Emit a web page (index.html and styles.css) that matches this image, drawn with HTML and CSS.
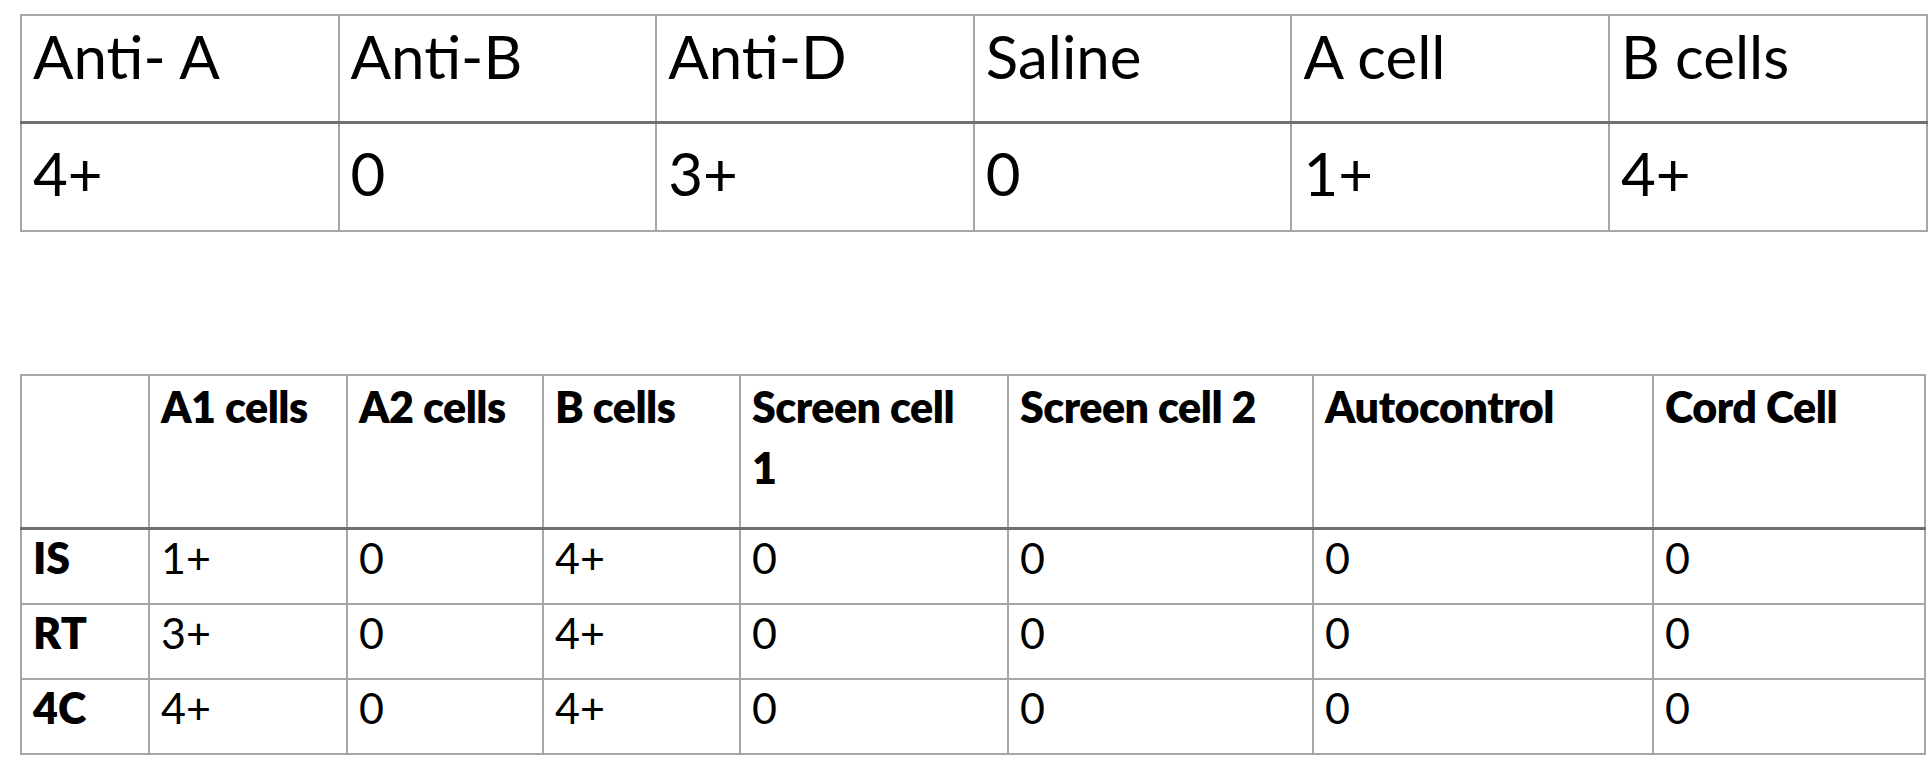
FILE: index.html
```html
<!DOCTYPE html>
<html lang="en">
<head>
<meta charset="utf-8">
<title>Blood typing results</title>
<link rel="stylesheet" href="styles.css">
</head>
<body>
<main class="page">
  <table class="grid grid-forward">
    <colgroup>
      <col class="c-fwd"><col class="c-fwd"><col class="c-fwd"><col class="c-fwd"><col class="c-fwd"><col class="c-fwd">
    </colgroup>
    <thead>
      <tr>
        <th>Anti- A</th><th>Anti-B</th><th>Anti-D</th><th>Saline</th><th>A cell</th><th>B cells</th>
      </tr>
    </thead>
    <tbody>
      <tr>
        <td>4+</td><td>0</td><td>3+</td><td>0</td><td>1+</td><td>4+</td>
      </tr>
    </tbody>
  </table>

  <table class="grid grid-panel">
    <colgroup>
      <col class="c-phase"><col class="c-a1"><col class="c-a2"><col class="c-b"><col class="c-sc1"><col class="c-sc2"><col class="c-auto"><col class="c-cord">
    </colgroup>
    <thead>
      <tr>
        <th></th><th>A1 cells</th><th>A2 cells</th><th>B cells</th><th>Screen cell<br>1</th><th>Screen cell 2</th><th>Autocontrol</th><th>Cord Cell</th>
      </tr>
    </thead>
    <tbody>
      <tr><th>IS</th><td>1+</td><td>0</td><td>4+</td><td>0</td><td>0</td><td>0</td><td>0</td></tr>
      <tr><th>RT</th><td>3+</td><td>0</td><td>4+</td><td>0</td><td>0</td><td>0</td><td>0</td></tr>
      <tr><th>4C</th><td>4+</td><td>0</td><td>4+</td><td>0</td><td>0</td><td>0</td><td>0</td></tr>
    </tbody>
  </table>
</main>
</body>
</html>
```

FILE: styles.css
```css
html, body {
  margin: 0;
  padding: 0;
  background: #ffffff;
}

.page {
  display: flex;
  flex-direction: column;
  align-items: flex-start;
  gap: 142px;
  padding: 14px 0 0 20px;
  font-family: "Lato", "Open Sans", sans-serif;
  color: #000000;
}

.grid {
  border-collapse: collapse;
  table-layout: fixed;
  border: 2px solid #a6a6a6;
}

.grid th,
.grid td {
  border: 2px solid #a6a6a6;
  text-align: left;
  vertical-align: top;
  overflow: hidden;
}

.grid thead th {
  border-bottom: 3px solid #707070;
}

/* ---- first table ---- */
.grid-forward {
  width: 1906px;
}

.c-fwd { width: 317.6px; }

.grid-forward th,
.grid-forward td {
  font-weight: 400;
  font-size: 60px;
  line-height: 60px;
  padding: 10px 10px 0 11px;
}

.grid-forward thead th { height: 95px; }
.grid-forward tbody td {
  padding-top: 19px;
  height: 87px;
}

/* ---- second table ---- */
.grid-panel {
  width: 1906px;
}

.c-phase { width: 128px; }
.c-a1 { width: 198px; }
.c-a2 { width: 196px; }
.c-b { width: 197px; }
.c-sc1 { width: 268px; }
.c-sc2 { width: 305px; }
.c-auto { width: 340px; }
.c-cord { width: 272px; }

.grid-panel th,
.grid-panel td {
  font-size: 43px;
  padding: 0 10px 0 11px;
}

.grid-panel thead th {
  font-weight: 800;
  line-height: 61px;
  height: 151px;
  letter-spacing: -0.5px;
}

.grid-panel tbody th,
.grid-panel tbody td {
  line-height: 55px;
  height: 73px;
}

.grid-panel tbody th { font-weight: 800; }
.grid-panel tbody td { font-weight: 400; }
```
